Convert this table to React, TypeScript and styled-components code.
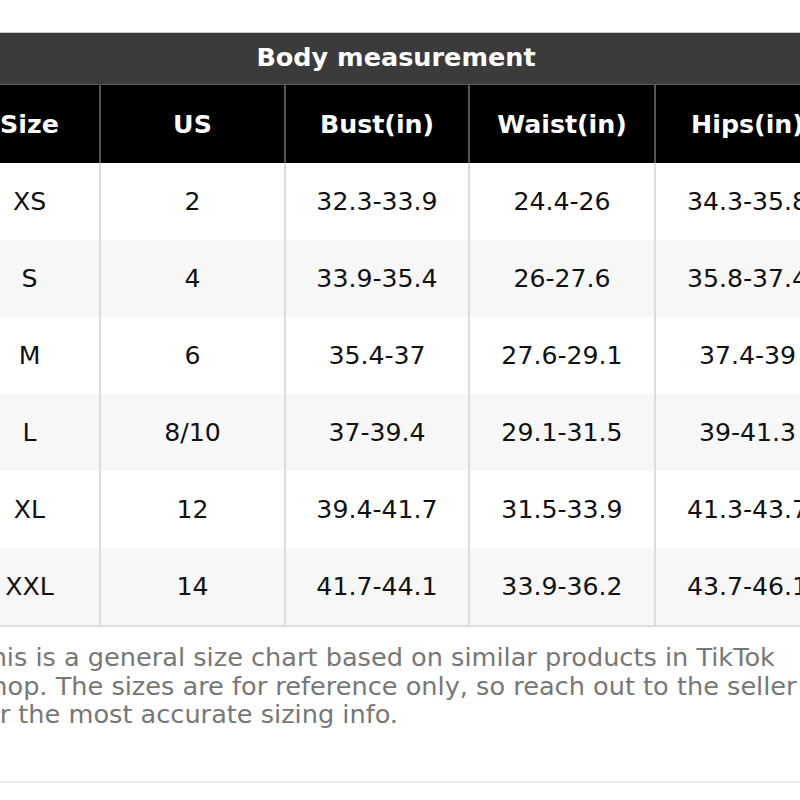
import React from 'react';
import styled, { createGlobalStyle } from 'styled-components';

const GlobalStyle = createGlobalStyle`
  html, body {
    margin: 0;
    padding: 0;
    background: #ffffff;
    overflow: hidden;
  }
  body {
    font-family: "DejaVu Sans", "Noto Sans", sans-serif;
  }
`;

const Page = styled.div`
  width: 800px;
  height: 800px;
  padding-top: 32px;
  box-sizing: border-box;
  overflow: hidden;
`;

const Chart = styled.table`
  margin-left: -40px;
  width: 879px;
  border-collapse: collapse;
  table-layout: fixed;
  border-bottom: 2px solid #dedede;
`;

const TitleCell = styled.th`
  height: 48px;
  padding: 0 7px 3px 0;
  background: #3b3b3b;
  color: #ffffff;
  font-size: 25.5px;
  font-weight: bold;
  text-align: center;
  border-top: 1px solid #c8c8c8;
  border-bottom: 1px solid #5c5c5c;
`;

const HeadCell = styled.th`
  height: 78px;
  padding: 0;
  background: #000000;
  color: #ffffff;
  font-size: 25.3px;
  font-weight: bold;
  text-align: center;
  border-left: 2px solid #555555;
  white-space: nowrap;
  &:first-child {
    border-left: none;
  }
`;

const Row = styled.tr<{ $shaded: boolean }>`
  background: ${(p) => (p.$shaded ? '#f7f7f7' : '#ffffff')};
`;

const Cell = styled.td`
  height: 77px;
  padding: 0;
  color: #111111;
  font-size: 25.2px;
  text-align: center;
  border-left: 2px solid #dcdcdc;
  white-space: nowrap;
  &:first-child {
    border-left: none;
  }
`;

const Note = styled.p`
  margin: 16px 0 0 -25px;
  width: 860px;
  color: #777777;
  font-size: 25.6px;
  line-height: 28.6px;
`;

const Rule = styled.div`
  margin-top: 52px;
  height: 2px;
  background: #eeeeee;
`;

const columns = [
  { label: 'Size', width: 140 },
  { label: 'US', width: 185 },
  { label: 'Bust(in)', width: 184 },
  { label: 'Waist(in)', width: 186 },
  { label: 'Hips(in)', width: 184 },
];

const rows = [
  ['XS', '2', '32.3-33.9', '24.4-26', '34.3-35.8'],
  ['S', '4', '33.9-35.4', '26-27.6', '35.8-37.4'],
  ['M', '6', '35.4-37', '27.6-29.1', '37.4-39'],
  ['L', '8/10', '37-39.4', '29.1-31.5', '39-41.3'],
  ['XL', '12', '39.4-41.7', '31.5-33.9', '41.3-43.7'],
  ['XXL', '14', '41.7-44.1', '33.9-36.2', '43.7-46.1'],
];

export default function App() {
  return (
    <Page>
      <GlobalStyle />
      <Chart>
        <colgroup>
          {columns.map((c) => (
            <col key={c.label} style={{ width: c.width }} />
          ))}
        </colgroup>
        <thead>
          <tr>
            <TitleCell colSpan={5}>Body measurement</TitleCell>
          </tr>
          <tr>
            {columns.map((c) => (
              <HeadCell key={c.label}>{c.label}</HeadCell>
            ))}
          </tr>
        </thead>
        <tbody>
          {rows.map((r, i) => (
            <Row key={r[0]} $shaded={i % 2 === 1}>
              {r.map((v, j) => (
                <Cell key={j}>{v}</Cell>
              ))}
            </Row>
          ))}
        </tbody>
      </Chart>
      <Note>
        This is a general size chart based on similar products in TikTok
        <br />
        Shop. The sizes are for reference only, so reach out to the seller
        <br />
        for the most accurate sizing info.
      </Note>
      <Rule />
    </Page>
  );
}
